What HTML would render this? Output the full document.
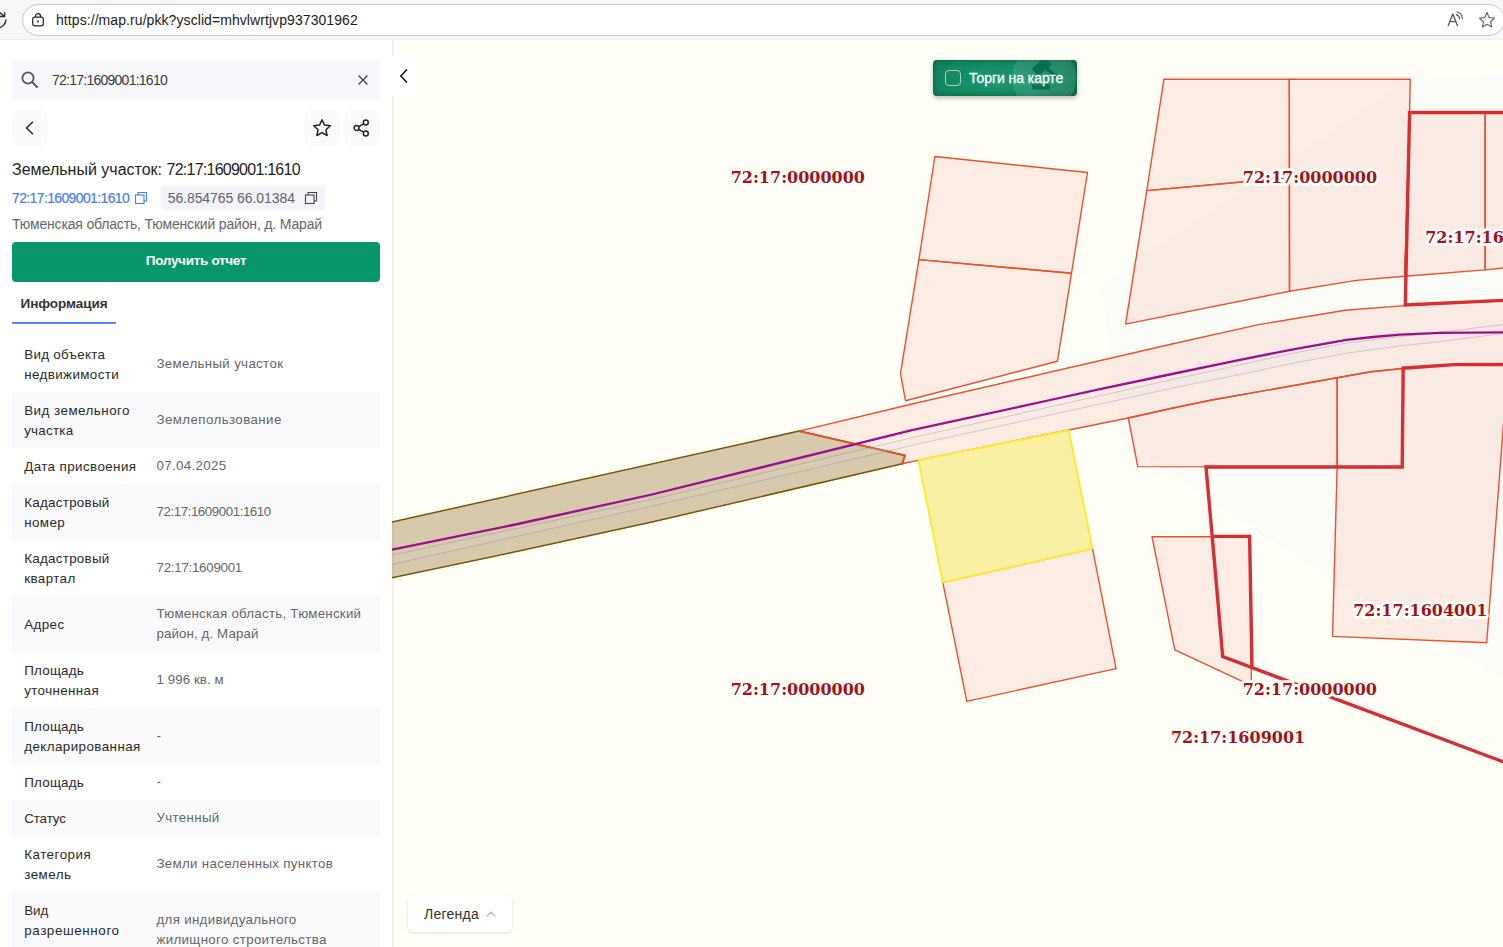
<!DOCTYPE html>
<html lang="ru">
<head>
<meta charset="utf-8">
<title>Земельный участок: 72:17:1609001:1610</title>
<style>
*{box-sizing:border-box;margin:0;padding:0}
html,body{width:1503px;height:947px;overflow:hidden;background:#fff}
body{font-family:"Liberation Sans",sans-serif;color:#222;position:relative}
.abs{position:absolute}
/* browser chrome */
#chrome{position:absolute;left:0;top:0;width:1503px;height:40px;background:#f7f7f7;border-bottom:1px solid #eeeeee}
#urlbar{position:absolute;left:22px;top:4px;width:1483px;height:32px;border:1px solid #c6c6c6;border-radius:16px;background:#fff}
#url{position:absolute;left:56px;top:12px;font-size:14px;line-height:16px;color:#1b1b1b;white-space:nowrap;letter-spacing:0.075px}
/* left panel */
#panel{position:absolute;left:0;top:40px;width:392px;height:907px;background:#fff;overflow:hidden}
#search{position:absolute;left:12px;top:20px;width:368px;height:40px;background:#f7f8fc;border-radius:0}
#search .q{position:absolute;left:40px;top:10.6px;font-size:14px;line-height:18px;color:#3a3a3e;white-space:nowrap;letter-spacing:-0.75px}
.sqbtn{position:absolute;width:36px;height:36px;border-radius:8px;background:#fafafc}
#title{position:absolute;left:12px;top:120px;font-size:16px;line-height:20px;color:#1e1e1e;white-space:nowrap;letter-spacing:0}
#title b{font-weight:normal;letter-spacing:-0.75px}
#cn{position:absolute;left:12px;top:149px;font-size:14px;line-height:18px;color:#4a7cf0;white-space:nowrap;letter-spacing:-0.63px;-webkit-text-stroke:0.2px #4a7cf0}
#coord{position:absolute;left:161px;top:146px;width:164px;height:24px;background:#f3f4fa;border-radius:3px}
#coord span{position:absolute;left:6.7px;top:3px;font-size:14px;line-height:18px;color:#646468;white-space:nowrap;letter-spacing:-0.07px}
#addr{position:absolute;left:12px;top:175px;font-size:14px;line-height:18px;color:#666;white-space:nowrap;letter-spacing:-0.17px}
#report{position:absolute;left:12px;top:202px;width:368px;height:40px;background:#06966a;border-radius:4px;color:#fff;font-weight:bold;font-size:13.5px;line-height:38px;text-align:center;letter-spacing:-0.3px}
#tab{position:absolute;left:20.5px;top:255px;font-size:13.5px;font-weight:bold;line-height:18px;color:#333;white-space:nowrap;letter-spacing:-0.06px}
#tabline{position:absolute;left:12px;top:282px;width:104px;height:2px;background:#5b86f5}
.row{position:absolute;left:12px;width:368px}
.row.alt{background:#fafafd}
.row .k{position:absolute;left:12.2px;margin-top:0.9px;font-size:13.4px;line-height:20px;color:#2a2a2a;white-space:nowrap}
.row .v{position:absolute;left:144.5px;margin-top:0.8px;font-size:13.3px;line-height:20px;color:#666;white-space:nowrap}
/* map */
#map{position:absolute;left:392px;top:40px;width:1111px;height:907px;background:#fffef7;overflow:hidden}
#mapsvg{position:absolute;left:0;top:0}
#collapse{position:absolute;left:0;top:16px;width:24px;height:40px;background:#fff;border-radius:0 6px 6px 0}
#torgi{position:absolute;left:541px;top:20px;width:144px;height:36px;border-radius:4px;background:radial-gradient(ellipse 75% 120% at 42% 55%,#1a9a72 0%,#128861 45%,#0a6e4e 100%);box-shadow:0 2px 5px rgba(0,0,0,.28),inset 0 0 5px rgba(0,50,30,.45);overflow:hidden}
#torgi .circ{position:absolute;left:79px;top:-14px;width:64px;height:64px;border-radius:50%;background:rgba(255,255,255,.11)}
#torgi .cb{position:absolute;left:12px;top:10px;width:16px;height:16px;border:1px solid rgba(255,255,255,.62);border-radius:4px}
#torgi .t{position:absolute;left:36px;top:9px;font-size:14px;line-height:18px;color:#fff;white-space:nowrap;letter-spacing:-0.05px;-webkit-text-stroke:0.3px #fff}
#legend{position:absolute;left:16px;top:856px;width:104px;height:36px;background:#fff;border-radius:4px;box-shadow:0 1px 3px rgba(0,0,0,.12)}
#legend .t{position:absolute;left:16px;top:9px;font-size:14px;line-height:18px;color:#333;white-space:nowrap;letter-spacing:0.25px}
.lbl{font-family:"DejaVu Serif","Liberation Serif",serif;font-weight:bold;font-size:16px;fill:#a31313}
.halo{stroke:#fff;stroke-width:5.6px;stroke-linejoin:round;paint-order:stroke}
</style>
</head>
<body>
<div id="chrome">
  <svg class="abs" style="left:0;top:0" width="12" height="40" viewBox="0 0 12 40"><path d="M5.9 19.4 A8.4 8.4 0 0 1 -1 27.8" fill="none" stroke="#2b2b2b" stroke-width="1.4"/><path d="M-1 16.5 H4.6 V12.3 M-1 12 L4.3 16.2" fill="none" stroke="#2b2b2b" stroke-width="1.4"/></svg>
  <div id="urlbar"></div>
  <svg class="abs" style="left:30px;top:10.5px" width="16" height="17" viewBox="0 0 16 17"><rect x="2.7" y="6.2" width="10.6" height="8.6" rx="2" fill="none" stroke="#222" stroke-width="1.2"/><path d="M5.4 6 V5.2 a2.6 2.6 0 0 1 5.2 0 V6" fill="none" stroke="#222" stroke-width="1.2"/><circle cx="8" cy="10.5" r="1" fill="#222"/></svg>
  <div id="url">https://map.ru/pkk?ysclid=mhvlwrtjvp937301962</div>
  <svg class="abs" style="left:1445px;top:9px" width="22" height="20" viewBox="0 0 22 20"><path d="M3.2 16.5 L7.8 5 L12.4 16.5 M4.8 12.6 H10.8" fill="none" stroke="#555" stroke-width="1.3" stroke-linejoin="round" stroke-linecap="round"/><path d="M11.3 5.6 a4.5 4.5 0 0 1 3.3 4.2 M12 3 a7 7 0 0 1 5.3 6.6" fill="none" stroke="#555" stroke-width="1.2" stroke-linecap="round"/></svg>
  <svg class="abs" style="left:1477px;top:10px" width="20" height="20" viewBox="0 0 20 20"><path d="M10 2.6 l2.2 4.9 5.3 .6 -4 3.6 1.1 5.2 -4.6 -2.7 -4.6 2.7 1.1 -5.2 -4 -3.6 5.3 -.6z" fill="none" stroke="#666" stroke-width="1.2" stroke-linejoin="round"/></svg>
</div>

<div id="panel">
  <div id="search">
    <svg class="abs" style="left:8.3px;top:10.2px" width="20" height="20" viewBox="0 0 20 20"><circle cx="8" cy="8" r="5.6" fill="none" stroke="#4b5261" stroke-width="1.7"/><path d="M12.2 12.2 L17 17" stroke="#4b5261" stroke-width="1.9" stroke-linecap="round"/></svg>
    <div class="q">72:17:1609001:1610</div>
    <svg class="abs" style="left:345px;top:14px" width="12" height="12" viewBox="0 0 12 12"><path d="M1.5 1.5 L10.5 10.5 M10.5 1.5 L1.5 10.5" stroke="#444" stroke-width="1.3"/></svg>
  </div>
  <div class="sqbtn" style="left:12px;top:70px"><svg class="abs" style="left:10px;top:10px" width="16" height="16" viewBox="0 0 16 16"><path d="M10.5 2.2 L4.5 8 L10.5 13.8" fill="none" stroke="#22252b" stroke-width="1.5" stroke-linecap="round" stroke-linejoin="round"/></svg></div>
  <div class="sqbtn" style="left:304px;top:70px"><svg class="abs" style="left:7px;top:7px" width="22" height="22" viewBox="0 0 22 22"><path d="M11 2.8 l2.5 5.3 5.8 .7 -4.3 4 1.1 5.7 -5.1 -2.9 -5.1 2.9 1.1 -5.7 -4.3 -4 5.8 -.7z" fill="none" stroke="#222" stroke-width="1.5" stroke-linejoin="round"/></svg></div>
  <div class="sqbtn" style="left:344px;top:70px"><svg class="abs" style="left:8px;top:8px" width="20" height="20" viewBox="0 0 20 20"><circle cx="13.8" cy="4.5" r="2.45" fill="none" stroke="#22252b" stroke-width="1.5"/><circle cx="4.6" cy="10" r="2.45" fill="none" stroke="#22252b" stroke-width="1.5"/><circle cx="13.8" cy="15.5" r="2.45" fill="none" stroke="#22252b" stroke-width="1.5"/><path d="M6.8 8.7 L11.6 5.8 M6.8 11.3 L11.6 14.2" stroke="#22252b" stroke-width="1.5"/></svg></div>

  <div id="title">Земельный участок: <b>72:17:1609001:1610</b></div>
  <div id="cn">72:17:1609001:1610</div>
  <svg class="abs" style="left:134px;top:151px" width="14" height="14" viewBox="0 0 14 14"><rect x="1.5" y="4" width="8.5" height="8.5" fill="#fff" stroke="#4a7cf0" stroke-width="1.1"/><path d="M4 4 V1.5 H12.5 V10 H10" fill="none" stroke="#4a7cf0" stroke-width="1.1"/></svg>
  <div id="coord"><span>56.854765 66.01384</span>
    <svg class="abs" style="left:143px;top:5px" width="14" height="14" viewBox="0 0 14 14"><rect x="1.5" y="4" width="8.5" height="8.5" fill="#f3f4fa" stroke="#444" stroke-width="1.1"/><path d="M4 4 V1.5 H12.5 V10 H10" fill="none" stroke="#444" stroke-width="1.1"/></svg>
  </div>
  <div id="addr">Тюменская область, Тюменский район, д. Марай</div>
  <div id="report">Получить отчет</div>
  <div id="tab">Информация</div>
  <div id="tabline"></div>

  <div class="row" style="top:296px;height:56px"><div class="k" style="top:8px"><span style="letter-spacing:0.30px">Вид объекта</span><br><span style="letter-spacing:0.38px">недвижимости</span></div><div class="v" style="top:17px"><span style="letter-spacing:0.34px">Земельный участок</span></div></div>
  <div class="row alt" style="top:352px;height:56px"><div class="k" style="top:8px"><span style="letter-spacing:0.47px">Вид земельного</span><br><span style="letter-spacing:0.24px">участка</span></div><div class="v" style="top:17px"><span style="letter-spacing:0.42px">Землепользование</span></div></div>
  <div class="row" style="top:408px;height:36px"><div class="k" style="top:8px"><span style="letter-spacing:0.40px">Дата присвоения</span></div><div class="v" style="top:7px"><span style="letter-spacing:0.35px">07.04.2025</span></div></div>
  <div class="row alt" style="top:444px;height:56px"><div class="k" style="top:8px"><span style="letter-spacing:0.27px">Кадастровый</span><br><span style="letter-spacing:0.39px">номер</span></div><div class="v" style="top:17px"><span style="letter-spacing:-0.43px">72:17:1609001:1610</span></div></div>
  <div class="row" style="top:500px;height:56px"><div class="k" style="top:8px"><span style="letter-spacing:0.27px">Кадастровый</span><br><span style="letter-spacing:0.40px">квартал</span></div><div class="v" style="top:17px"><span style="letter-spacing:-0.25px">72:17:1609001</span></div></div>
  <div class="row alt" style="top:556px;height:56px"><div class="k" style="top:18px"><span style="letter-spacing:0.39px">Адрес</span></div><div class="v" style="top:7px"><span style="letter-spacing:0.26px">Тюменская область, Тюменский</span><br><span style="letter-spacing:0.11px">район, д. Марай</span></div></div>
  <div class="row" style="top:612px;height:56px"><div class="k" style="top:8px"><span style="letter-spacing:0.22px">Площадь</span><br><span style="letter-spacing:0.37px">уточненная</span></div><div class="v" style="top:17px"><span style="letter-spacing:0.07px">1 996 кв. м</span></div></div>
  <div class="row alt" style="top:668px;height:56px"><div class="k" style="top:8px"><span style="letter-spacing:0.22px">Площадь</span><br><span style="letter-spacing:0.42px">декларированная</span></div><div class="v" style="top:17px">-</div></div>
  <div class="row" style="top:724px;height:36px"><div class="k" style="top:8px"><span style="letter-spacing:0.22px">Площадь</span></div><div class="v" style="top:7px">-</div></div>
  <div class="row alt" style="top:760px;height:36px"><div class="k" style="top:8px"><span style="letter-spacing:-0.11px">Статус</span></div><div class="v" style="top:7px"><span style="letter-spacing:0.34px">Учтенный</span></div></div>
  <div class="row" style="top:796px;height:56px"><div class="k" style="top:8px"><span style="letter-spacing:0.50px">Категория</span><br><span style="letter-spacing:0.47px">земель</span></div><div class="v" style="top:17px"><span style="letter-spacing:0.31px">Земли населенных пунктов</span></div></div>
  <div class="row alt" style="top:852px;height:76px"><div class="k" style="top:8px"><span style="letter-spacing:-0.02px">Вид</span><br><span style="letter-spacing:0.60px">разрешенного</span></div><div class="v" style="top:17px"><span style="letter-spacing:0.32px">для индивидуального</span><br><span style="letter-spacing:0.34px">жилищного строительства</span></div></div>
</div>

<div id="map">
<svg id="mapsvg" width="1111" height="907" viewBox="392 40 1111 907">
<g stroke-linejoin="round">
<!-- faint background region -->
<polygon points="1101,285 1411,77.5 1510,74.3 1510,684 1330,579 1238.8,520 1120,436" fill="#fbfcf7" stroke="none"/>
<g fill="rgba(240,78,60,0.1)" stroke="#e8512f" stroke-width="1.4">
<!-- center two parcels -->
<polygon points="934.9,156.5 1087.5,172.5 1071.5,273.3 918.9,259.6"/>
<polygon points="918.9,259.6 1071.5,273.3 1057.4,361.3 905.5,400.8 900.5,373.3"/>
<!-- top-right block -->
<polygon points="1163.9,79.3 1289.3,79.3 1289.4,177.6 1146.8,190.6"/>
<polygon points="1146.8,190.6 1289.4,177.6 1289.5,291.2 1125.6,324.1"/>
<polygon points="1289.3,79.3 1410.2,79.3 1409.6,112.7 1404.8,276.3 1356.3,280.4 1289.5,291.2"/>
<polygon points="1409.6,112.7 1485.1,112.7 1485.1,269.9 1404.8,276.3"/>
<polygon points="1485.1,112.7 1512,112.7 1512,267 1485.1,269.9"/>
<!-- road strip -->
<polygon points="799.1,431.1 912,404 1172,344 1258.5,324.6 1345,310.3 1404.9,305.6 1512,300.4 1512,364.4 1454,364.6 1403,368.5 1371,371.7 1337.2,377.8 1211.8,400 1172,408.3 1128.3,418 1068.7,430 918.5,460.1 902.3,463.7 904.9,455.4"/>
<!-- below road right -->
<polygon points="1128.3,418 1172,408.3 1211.8,400 1337.2,377.8 1337.1,467 1137.8,466.6"/>
<polygon points="1337.2,377.8 1371,371.7 1403,368.5 1454,364.6 1508.1,364.4 1486.7,642.8 1332.5,636.4 1335.7,520 1337.1,467"/>
<!-- small parcel lower right -->
<polygon points="1152,536.7 1250.2,536.7 1251.4,685.6 1174.8,649.8"/>
<!-- parcel below yellow -->
<polygon points="942.8,582.4 1092.5,548.6 1116.1,668.6 966.8,701.4"/>
</g>
<!-- brown road section -->
<polygon points="380,524.7 392,522 799.1,431.1 904.9,455.4 902.3,463.7 652,522 513.1,552.3 392,577.8 380,580.3" fill="#d7c9ac" stroke="#7a5600" stroke-width="1.5"/>
<path d="M799.1,431.1 L904.9,455.4 L902.3,463.7" fill="none" stroke="#e2532d" stroke-width="2"/>
<!-- band between gray lines -->
<polygon points="380,557.9 392,555.3 652,499.5 912,437.7 1172,379.6 1240,364.8 1293.2,353.2 1346.5,343 1399.7,336.6 1419.6,334.6 1440,332.2 1512,323.5 1512,332.3 1440,341.7 1399.7,345.9 1346.5,353.2 1293.2,363.2 1240,374.5 1172,388.2 912,445.4 652,506 392,564.3 380,567" fill="rgba(228,225,245,0.16)" stroke="none"/>
<g fill="none" stroke="rgba(130,120,120,0.32)" stroke-width="1">
<path d="M380,557.9 L392,555.3 L652,499.5 L912,437.7 L1172,379.6 L1240,364.8 L1293.2,353.2 L1346.5,343 L1399.7,336.6 L1419.6,334.6 L1440,332.2 L1512,323.5"/>
<path d="M380,567 L392,564.3 L652,506 L912,445.4 L1172,388.2 L1240,374.5 L1293.2,363.2 L1346.5,353.2 L1399.7,345.9 L1440,341.7 L1512,332.3"/>
</g>
<!-- purple line -->
 <path d="M380,552 L392,549.6 L513.1,525 L652,494.5 L912,430.2 L1050.3,400 L1100,389.2 L1172,374 L1240,359.9 L1293.2,349.3 L1346.5,339.9 L1373,337 L1399.7,334.6 L1440,332.9 L1512,332.4" fill="none" stroke="#9b0f8e" stroke-width="2.3"/>
<!-- yellow selected -->
<polygon points="918.5,460.1 1068.7,430.2 1092.5,548.6 942.8,582.4" fill="#faf0a3" stroke="#fdea2e" stroke-width="1.9"/>
<!-- thick quarter boundaries -->
<g fill="none" stroke="#d62f33" stroke-width="3.4" stroke-linejoin="miter">
<path d="M1512,112.5 L1409.6,112.5 L1405.3,305 L1512,300"/>
<path d="M1512,364.4 L1454,364.6 L1403.2,368.2 L1402.2,467 L1206,467 L1214.3,560 L1222.7,656.6 L1512,765.1"/>
<path d="M1213,536.4 L1249.6,536.4 L1252,667"/>
</g>
</g>
<g class="lbl">
<text x="730.7" y="182.8" class="halo">72:17:0000000</text>
<text x="1242.8" y="182.8" class="halo">72:17:0000000</text>
<text x="1425.2" y="242.7" class="halo">72:17:1609001</text>
<text x="1353.2" y="615.9" class="halo">72:17:1604001</text>
<text x="730.7" y="694.9" class="halo">72:17:0000000</text>
<text x="1242.7" y="695.3" class="halo">72:17:0000000</text>
<text x="1170.9" y="743.4" class="halo">72:17:1609001</text>
</g>
</svg>
  <div class="abs" style="left:0;top:0;width:3px;height:907px;background:linear-gradient(90deg,rgba(0,0,0,.07),rgba(0,0,0,0))"></div>
  <div id="collapse"><svg class="abs" style="left:4px;top:12px" width="16" height="16" viewBox="0 0 16 16"><path d="M10.5 2.1 L4.8 8 L10.5 13.9" fill="none" stroke="#111" stroke-width="1.5" stroke-linecap="square" stroke-linejoin="miter"/></svg></div>
  <div id="torgi"><div class="circ"></div><svg class="abs" style="left:96px;top:0" width="40" height="36" viewBox="0 0 40 36"><g fill="#0a7051"><rect x="3" y="24.5" width="18" height="5"/><g transform="rotate(-40 13 7)"><rect x="4" y="1.5" width="18" height="10" rx="1"/></g><path d="M14 8 L17 5.5 L31 17.5 L28.5 20z"/></g></svg><div class="cb"></div><div class="t">Торги на карте</div></div>
  <div id="legend"><div class="t">Легенда</div><svg class="abs" style="left:77px;top:13px" width="12" height="10" viewBox="0 0 12 10"><path d="M2 7 L6 3 L10 7" fill="none" stroke="#b9c2dc" stroke-width="1.5" stroke-linecap="round" stroke-linejoin="round"/></svg></div>
</div>
</body>
</html>
